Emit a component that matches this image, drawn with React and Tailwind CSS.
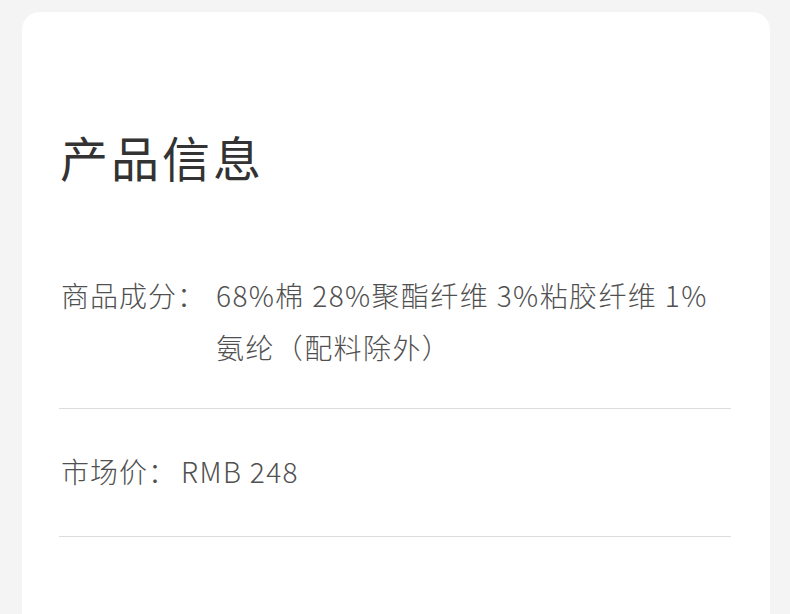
import React from "react";

const font = {
  fontFamily: '"Noto Sans CJK SC", "Noto Sans", sans-serif',
};

const rows = [
  {
    label: "商品成分：",
    value: "68%棉 28%聚酯纤维 3%粘胶纤维 1% 氨纶（配料除外）",
    gap: "ml-[10px]",
  },
  { label: "市场价：", value: "RMB 248", gap: "ml-[4px]" },
];

export default function App() {
  return (
    <div
      className="min-h-screen bg-[#f4f4f4] pl-[22px] pr-[20px] pt-[12px] overflow-hidden"
      style={font}
    >
      <div className="bg-white rounded-[18px] pl-[37px] pr-[39px] pt-[120px] min-h-[640px]">
        <h2 className="text-[48px] leading-[48px] font-normal tracking-[3px] text-[#333] pl-[1px]">
          产品信息
        </h2>

        <div className="mt-[89px]">
          {rows.map((r, i) => (
            <div
              key={i}
              className={
                "flex text-[28px] leading-[52px] font-light tracking-[1px] text-[#505050] border-b border-[#dddddd] " +
                (i === 0 ? "pb-[35px]" : "pt-[36px] pb-[39px]")
              }
            >
              <span className="shrink-0 pl-[2px]">{r.label}</span>
              <span className={r.gap + " tracking-[1.4px]"}>{r.value}</span>
            </div>
          ))}
        </div>
      </div>
    </div>
  );
}
